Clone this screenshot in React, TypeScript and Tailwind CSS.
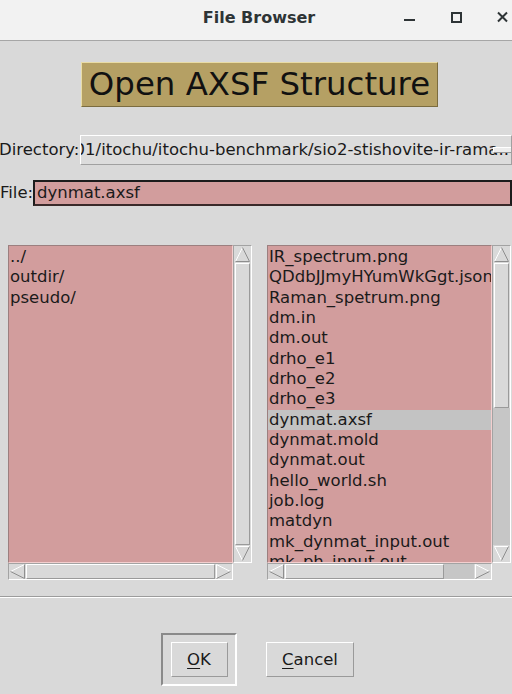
import React from 'react';

const FONT = { fontFamily: '"DejaVu Sans", "Liberation Sans", sans-serif' };

const dirs = ['../', 'outdir/', 'pseudo/'];
const files = [
  'IR_spectrum.png',
  'QDdbJJmyHYumWkGgt.json',
  'Raman_spetrum.png',
  'dm.in',
  'dm.out',
  'drho_e1',
  'drho_e2',
  'drho_e3',
  'dynmat.axsf',
  'dynmat.mold',
  'dynmat.out',
  'hello_world.sh',
  'job.log',
  'matdyn',
  'mk_dynmat_input.out',
  'mk_ph_input.out',
];

type Dir = 'up' | 'down' | 'left' | 'right';

/** Tk-style hollow arrow: light edge towards the top/left, dark edge towards bottom/right. */
function Arrow({ dir }: { dir: Dir }) {
  const light = '#ffffff';
  const dark = '#8e8e8e';
  return (
    <svg width="17" height="17" viewBox="0 0 17 17" className="block">
      {dir === 'up' && (
        <>
          <line x1="1.5" y1="15.5" x2="8.5" y2="1.5" stroke={light} />
          <line x1="8.5" y1="1.5" x2="15.5" y2="15.5" stroke={dark} />
          <line x1="1.5" y1="15.5" x2="15.5" y2="15.5" stroke={dark} />
        </>
      )}
      {dir === 'down' && (
        <>
          <line x1="1.5" y1="1.5" x2="15.5" y2="1.5" stroke={light} />
          <line x1="1.5" y1="1.5" x2="8.5" y2="15.5" stroke={light} />
          <line x1="15.5" y1="1.5" x2="8.5" y2="15.5" stroke={dark} />
        </>
      )}
      {dir === 'left' && (
        <>
          <line x1="15.5" y1="1.5" x2="1.5" y2="8.5" stroke={light} />
          <line x1="1.5" y1="8.5" x2="15.5" y2="15.5" stroke={dark} />
          <line x1="15.5" y1="1.5" x2="15.5" y2="15.5" stroke={dark} />
        </>
      )}
      {dir === 'right' && (
        <>
          <line x1="1.5" y1="1.5" x2="15.5" y2="8.5" stroke={light} />
          <line x1="1.5" y1="1.5" x2="1.5" y2="15.5" stroke={light} />
          <line x1="15.5" y1="8.5" x2="1.5" y2="15.5" stroke={dark} />
        </>
      )}
    </svg>
  );
}

function VScroll({ slider, rest }: { slider: number; rest: number }) {
  return (
    <div className="flex h-[318px] w-[19px] flex-col border border-t-[#a3a3a3] border-l-[#a3a3a3] border-b-white border-r-white bg-[#d9d9d9]">
      <Arrow dir="up" />
      <div
        className="mx-[1px] border border-t-white border-l-white border-b-[#9a9a9a] border-r-[#9a9a9a] bg-[#d9d9d9]"
        style={{ height: slider }}
      />
      <div className="bg-[#c6c6c6]" style={{ height: rest }} />
      <div className="flex-1" />
      <Arrow dir="down" />
    </div>
  );
}

function HScroll({ slider, rest }: { slider: number; rest: number }) {
  return (
    <div className="flex h-[17px] w-[225px] border border-t-[#a3a3a3] border-l-[#a3a3a3] border-b-white border-r-white bg-[#d9d9d9]">
      <div className="-mt-[1px]">
        <Arrow dir="left" />
      </div>
      <div
        className="border border-t-white border-l-white border-b-[#9a9a9a] border-r-[#9a9a9a] bg-[#d9d9d9]"
        style={{ width: slider }}
      />
      <div className="bg-[#c6c6c6]" style={{ width: rest }} />
      <div className="flex-1" />
      <div className="-mt-[1px]">
        <Arrow dir="right" />
      </div>
    </div>
  );
}

function ListPanel({
  items,
  selected,
  vSlider,
  vRest,
  hSlider,
  hRest,
}: {
  items: string[];
  selected?: string;
  vSlider: number;
  vRest: number;
  hSlider: number;
  hRest: number;
}) {
  return (
    <div className="flex flex-col">
      <div className="flex">
        <div className="h-[318px] w-[225px] overflow-hidden border border-t-[#9c7f7f] border-l-[#9c7f7f] border-b-[#f3cfcf] border-r-[#f3cfcf] bg-[#d29d9d] pt-[1px]">
          {items.map((it) => (
            <div
              key={it}
              className={`whitespace-nowrap pl-[1px] text-[16.5px] leading-[20.35px] text-[#1a1a1a] ${
                it === selected ? 'bg-[#c3c3c3]' : ''
              }`}
            >
              {it}
            </div>
          ))}
        </div>
        <VScroll slider={vSlider} rest={vRest} />
      </div>
      <HScroll slider={hSlider} rest={hRest} />
    </div>
  );
}

export default function App() {
  return (
    <div className="h-[694px] w-[512px] overflow-hidden bg-[#d9d9d9]" style={FONT}>
      {/* window title bar */}
      <div className="relative flex h-[41px] items-center justify-center border-b border-[#a6a6a6] bg-[#f2f2f2] pb-[4px]">
        <span className="pl-[6px] text-[16px] font-bold text-[#2e3436]">File Browser</span>
        <svg
          width="120"
          height="40"
          viewBox="0 0 120 40"
          className="absolute right-0 top-0"
        >
          <rect x="12" y="19" width="11" height="2" fill="#2e3436" />
          <rect x="60" y="13" width="9" height="9" fill="none" stroke="#2e3436" strokeWidth="2" />
          <path d="M106 12.5 L115 21.5 M115 12.5 L106 21.5" stroke="#2e3436" strokeWidth="2" />
        </svg>
      </div>

      {/* heading */}
      <div className="mt-[21px] flex justify-center">
        <div className="ml-[7px] flex h-[45px] w-[357px] items-center justify-center border border-t-[#e9dca6] border-l-[#e9dca6] border-b-[#7b6c3f] border-r-[#7b6c3f] bg-[#b5a064] text-[32.4px] text-[#111]">
          Open AXSF Structure
        </div>
      </div>

      {/* directory */}
      <div className="mt-[28px] flex h-[30px] items-center">
        <span className="-ml-[1px] w-[82px] whitespace-nowrap text-[16.5px] text-[#1a1a1a]">
          Directory:
        </span>
        <div className="relative flex h-[30px] w-[440px] items-center overflow-hidden border border-t-white border-l-white border-b-[#a0a0a0] border-r-[#a0a0a0] bg-[#dcdcdc]">
          <span className="-ml-[6px] whitespace-nowrap text-[16.5px] text-[#1a1a1a]">
            01/itochu/itochu-benchmark/sio2-stishovite-ir-rama..
          </span>
          <div className="absolute left-[412px] top-[11px] h-[6px] w-[20px] border border-t-white border-l-white border-b-[#9a9a9a] border-r-[#9a9a9a] bg-[#ececec]" />
        </div>
      </div>

      {/* file */}
      <div className="mt-[15px] flex h-[26px] items-center">
        <span className="w-[33px] text-[16.5px] text-[#1a1a1a]">File:</span>
        <div className="flex h-[26px] w-[490px] items-center border-2 border-[#1c1c1c] border-b-[#3a2a2a] bg-[#d29d9d] pl-[2px] text-[16.5px] text-[#1a1a1a]">
          dynmat.axsf
        </div>
      </div>

      {/* lists */}
      <div className="mt-[39px] flex gap-[15px] pl-[8px]">
        <ListPanel items={dirs} vSlider={282} vRest={0} hSlider={189} hRest={0} />
        <ListPanel
          items={files}
          selected="dynmat.axsf"
          vSlider={145}
          vRest={137}
          hSlider={160}
          hRest={30}
        />
      </div>

      <div className="mt-[16px] border-t border-b border-t-[#9c9c9c] border-b-white" />

      {/* buttons */}
      <div className="mt-[35px] flex items-start pl-[161px]">
        <div className="flex h-[53px] w-[76px] items-center justify-center border-2 border-t-[#8a8a8a] border-l-[#8a8a8a] border-b-white border-r-white">
          <div className="flex h-[35px] w-[57px] items-center justify-center border border-t-white border-l-white border-b-[#9a9a9a] border-r-[#9a9a9a] pt-[2px] text-[16.5px] text-[#1a1a1a]">
            <span className="underline underline-offset-[3px]">O</span>K
          </div>
        </div>
        <div className="ml-[29px] mt-[9px] flex h-[35px] w-[88px] items-center justify-center border border-t-white border-l-white border-b-[#9a9a9a] border-r-[#9a9a9a] pt-[2px] text-[16.5px] text-[#1a1a1a]">
          <span className="underline underline-offset-[3px]">C</span>ancel
        </div>
      </div>
    </div>
  );
}
